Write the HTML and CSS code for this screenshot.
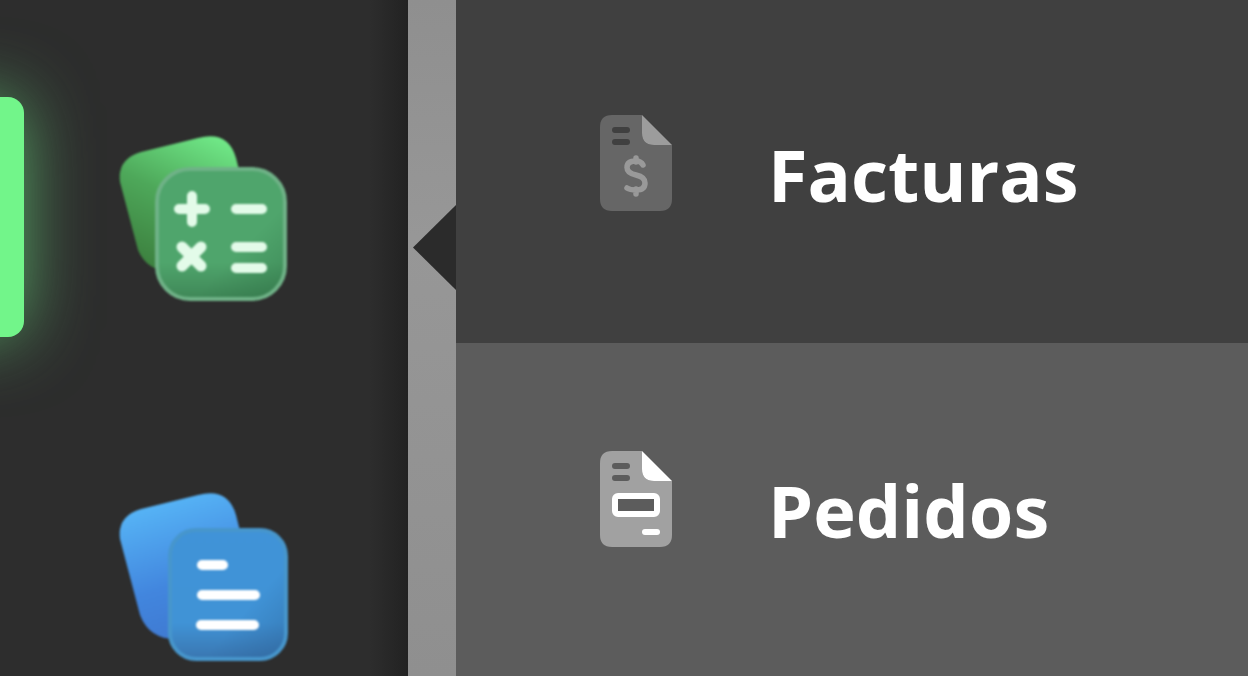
FILE: index.html
```html
<!DOCTYPE html>
<html lang="es">
<head>
<meta charset="utf-8">
<title>Menú</title>
<link rel="stylesheet" href="styles.css">
</head>
<body>
<div class="app">
  <aside class="sidebar">
    <div class="indicator"></div>
    <div class="app-icon calc">
      <svg width="168" height="168" viewBox="0 0 168 168">
        <defs>
          <linearGradient id="gb" x1="0.75" y1="0" x2="0.25" y2="1"><stop offset="0" stop-color="#72ec8a"/><stop offset="0.5" stop-color="#4ea85a"/><stop offset="1" stop-color="#3c7f3e"/></linearGradient>
          <linearGradient id="gf" x1="0" y1="0" x2="0" y2="1"><stop offset="0" stop-color="#4fa56c"/><stop offset="0.72" stop-color="#4fa56c"/><stop offset="1" stop-color="#3f8757"/></linearGradient>
          <linearGradient id="gs" x1="0.35" y1="0.35" x2="1" y2="1"><stop offset="0.45" stop-color="#2a6a40" stop-opacity="0"/><stop offset="1" stop-color="#2a6a40" stop-opacity="0.45"/></linearGradient>
        </defs>
        <g class="soft">
          <path d="M21 18 L78 4 Q108 -4 116 24 L140 120 L50 138 Q26 136 18 116 L0 48 Q-3 25 21 18Z" fill="url(#gb)"/>
          <rect x="37" y="35" width="128" height="130" rx="33" fill="url(#gf)" stroke="#6fb287" stroke-width="4"/>
          <rect x="39" y="37" width="124" height="126" rx="31" fill="url(#gs)"/>
          <g stroke="#e3fbe9" stroke-width="10" stroke-linecap="round" fill="none">
            <path d="M59 75H85M72 62V88M116 75H142M116 113H142M116 134H142"/>
            <path d="M62 113L81 132M81 113L62 132" stroke-width="11"/>
          </g>
        </g>
      </svg>
    </div>
    <div class="app-icon docs">
      <svg width="168" height="168" viewBox="0 0 168 168">
        <defs>
          <linearGradient id="bb" x1="0.3" y1="0" x2="0.6" y2="1"><stop offset="0" stop-color="#58b8f8"/><stop offset="0.6" stop-color="#4286de"/><stop offset="1" stop-color="#3f78d0"/></linearGradient>
          <linearGradient id="bf" x1="0" y1="0" x2="0" y2="1"><stop offset="0" stop-color="#4093d8"/><stop offset="0.72" stop-color="#4093d6"/><stop offset="1" stop-color="#3a76b0"/></linearGradient>
          <linearGradient id="bs" x1="0.35" y1="0.35" x2="1" y2="1"><stop offset="0.45" stop-color="#2a5f95" stop-opacity="0"/><stop offset="1" stop-color="#2a5f95" stop-opacity="0.5"/></linearGradient>
        </defs>
        <g class="soft">
          <path d="M21 18 L78 4 Q108 -4 116 24 L140 120 L60 148 Q30 150 20 124 L0 48 Q-3 25 21 18Z" fill="url(#bb)"/>
          <rect x="50" y="39" width="116" height="129" rx="26" fill="url(#bf)" stroke="#4796cc" stroke-width="4"/>
          <rect x="52" y="41" width="112" height="125" rx="24" fill="url(#bs)"/>
          <g stroke="#fff" stroke-width="10" stroke-linecap="round" fill="none">
            <path d="M82 74H103M82 104H135M81 134H134"/>
          </g>
        </g>
      </svg>
    </div>
  </aside>
  <div class="strip"><div class="pointer"></div></div>
  <main class="menu">
    <div class="row row-active">
      <svg class="file" width="72" height="96" viewBox="0 0 72 96">
        <path class="sheet" d="M12 0H42V18Q42 30 54 30H72V84Q72 96 60 96H12Q0 96 0 84V12Q0 0 12 0Z"/>
        <path class="fold" d="M42 0L72 30H54Q42 30 42 18Z"/>
        <path class="cut" d="M15 15H27M15 27H27"/>
        <path class="mark" d="M43 50Q41 46 36 46Q27 46 27 52.5Q27 58 36 60Q45 62 45 68Q45 75 36 75Q30 75 27 73M36 43V47M36 74V79"/>
      </svg>
      <span class="label">Facturas</span>
    </div>
    <div class="row">
      <svg class="file" width="72" height="96" viewBox="0 0 72 96">
        <path class="sheet" d="M12 0H42V18Q42 30 54 30H72V84Q72 96 60 96H12Q0 96 0 84V12Q0 0 12 0Z"/>
        <path class="fold" d="M42 0L72 30H54Q42 30 42 18Z"/>
        <path class="cut" d="M15 15H27M15 27H27"/>
        <rect class="box" x="15" y="45" width="42" height="18" rx="3"/>
        <path class="dash" d="M45 81H57"/>
      </svg>
      <span class="label">Pedidos</span>
    </div>
  </main>
</div>
</body>
</html>
```
FILE: styles.css
```css
html, body {
  margin: 0;
  padding: 0;
  height: 100%;
  overflow: hidden;
  background: #2d2d2d;
}
.app {
  display: flex;
  height: 676px;
  overflow: hidden;
  font-family: "Open Sans", "Liberation Sans", sans-serif;
}
.sidebar {
  position: relative;
  width: 408px;
  flex: none;
  box-sizing: border-box;
  padding: 134px 0 0 120px;
  display: flex;
  flex-direction: column;
  gap: 189px;
  overflow: hidden;
  background: linear-gradient(90deg, #2d2d2d 0, #2d2d2d 370px, #222 408px);
}
.app-icon { width: 168px; height: 168px; flex: none; }
.app-icon svg { display: block; overflow: visible; }
.soft { filter: blur(1px); }
.indicator {
  position: absolute;
  left: -80px;
  top: 97px;
  width: 104px;
  height: 240px;
  border-radius: 16px;
  background: #72f58a;
  box-shadow: 0 0 72px -4px rgba(114, 245, 138, 0.68);
}
.strip {
  position: relative;
  width: 48px;
  flex: none;
  background: linear-gradient(180deg, #8f8f8f 0, #979797 35%, #8f8f8f 100%);
}
.pointer {
  position: absolute;
  left: 5px;
  top: 205px;
  width: 43px;
  height: 85px;
  background: #2b2b2b;
  clip-path: polygon(100% 0, 0 50%, 100% 100%);
}
.menu {
  flex: 1;
  display: flex;
  flex-direction: column;
}
.row {
  display: flex;
  align-items: flex-start;
  gap: 96px;
  box-sizing: border-box;
  flex: none;
  height: 336px;
  padding: 108px 0 0 144px;
  background: #5c5c5c;
}
.row-active {
  height: 343px;
  padding-top: 115px;
  background: #404040;
}
.file { display: block; flex: none; }
.sheet { fill: #a1a1a1; }
.fold { fill: #fff; }
.cut { stroke: #5c5c5c; stroke-width: 6; stroke-linecap: round; fill: none; }
.box { fill: #5c5c5c; stroke: #fff; stroke-width: 6; }
.dash { stroke: #fff; stroke-width: 6; stroke-linecap: round; fill: none; }
.mark { stroke: #999; stroke-width: 5.5; stroke-linecap: round; fill: none; }
.row-active .sheet { fill: #666; }
.row-active .fold { fill: #9c9c9c; }
.row-active .cut { stroke: #404040; }
.label {
  color: #fff;
  font-size: 72px;
  font-weight: 700;
  line-height: 96px;
  margin-top: 11px;
  white-space: nowrap;
}
```
